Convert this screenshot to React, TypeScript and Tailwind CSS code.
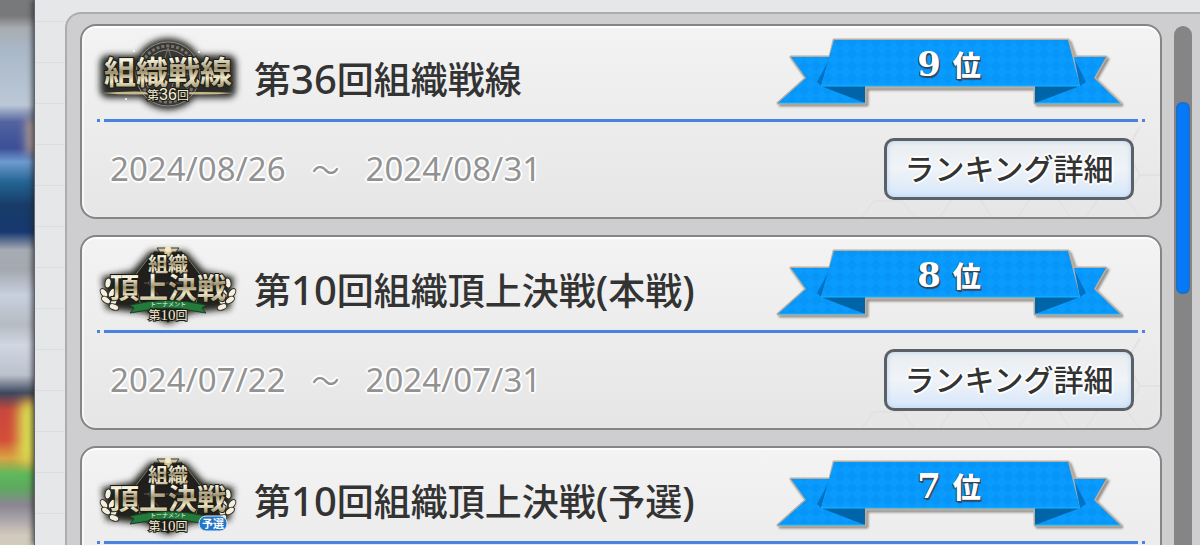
import type { ReactNode } from 'react'

interface RankingEntry {
  id: string
  title: string
  start: string
  end: string
  rank: number
  logo: 'front' | 'final' | 'qualifier'
}

const ENTRIES: RankingEntry[] = [
  { id: 'front-36', title: '第36回組織戦線', start: '2024/08/26', end: '2024/08/31', rank: 9, logo: 'front' },
  { id: 'final-10', title: '第10回組織頂上決戦(本戦)', start: '2024/07/22', end: '2024/07/31', rank: 8, logo: 'final' },
  { id: 'qualifier-10', title: '第10回組織頂上決戦(予選)', start: '', end: '', rank: 7, logo: 'qualifier' },
]

const LOGO_LABELS = { front: '組織戦線', final: '組織頂上決戦', qualifier: '組織頂上決戦 予選' }

// Leaves of the left laurel, mirrored for the right one
const LEAVES = [
  [18, 44, 10],
  [14, 54, -35],
  [22, 54, 30],
  [16, 61, -55],
  [24, 62, 20],
  [24, 68, -70],
]

function Defs({ id }: { id: string }) {
  return (
    <defs>
      <linearGradient id={`${id}-gold`} x1="0" y1="0" x2="0.1" y2="1">
        <stop offset="0" stopColor="#8d8060" />
        <stop offset="0.3" stopColor="#fbf7e2" />
        <stop offset="0.55" stopColor="#9c8f6c" />
        <stop offset="0.75" stopColor="#f1e9c8" />
        <stop offset="1" stopColor="#8b7d57" />
      </linearGradient>
      <filter id={`${id}-blur`} x="-20%" y="-30%" width="140%" height="160%">
        <feGaussianBlur stdDeviation="3" />
      </filter>
    </defs>
  )
}

function LogoText({ id, x, y, size, children }: { id: string; x: number; y: number; size: number; children: ReactNode }) {
  return (
    <text
      x={x}
      y={y}
      fontSize={size}
      fontWeight="700"
      textAnchor="middle"
      fill={`url(#${id}-gold)`}
      stroke="#1b1a15"
      strokeWidth="2"
      strokeLinejoin="round"
      paintOrder="stroke"
    >
      {children}
    </text>
  )
}

function FrontLogo({ id }: { id: string }) {
  return (
    <>
      <g filter={`url(#${id}-blur)`} fill="#2b2a28">
        <circle cx="78" cy="46" r="36" />
        <rect x="10" y="27" width="136" height="43" rx="8" />
      </g>
      <circle cx="78" cy="46" r="32" fill="#383734" stroke="#8f8d84" />
      <circle cx="78" cy="46" r="28" fill="none" stroke="#77756b" strokeWidth="3" strokeDasharray="3 2" />
      <circle cx="78" cy="46" r="24" fill="none" stroke="#8f8d84" />
      <path d="M78 20 L86 46 L78 72 L70 46 Z M53 46 H103" fill="none" stroke="#77756b" />
      <path d="M12 65 Q45 62 78 65 Q111 68 144 65 Q111 63 78 65 Q45 68 12 65" fill="#c7b98d" />
      <g fill="#fff">
        <circle cx="44" cy="23" r="1" />
        <circle cx="109" cy="24" r="1" />
        <circle cx="36" cy="71" r="1" />
      </g>
      <LogoText id={id} x={78} y={56} size={32}>組織戦線</LogoText>
      <text x="78" y="72" fontSize="12" textAnchor="middle" fill="#f4edd2" stroke="#1b1a15" strokeWidth="2" paintOrder="stroke">
        第<tspan fontSize="16" fontFamily="Liberation Sans">36</tspan>回
      </text>
    </>
  )
}

function FinalLogo({ id, qualifier }: { id: string; qualifier: boolean }) {
  const laurel = LEAVES.map(([x, y, angle]) => (
    <ellipse key={`${x}-${y}`} cx={x} cy={y} rx="3" ry="5" transform={`rotate(${angle} ${x} ${y})`} />
  ))
  return (
    <>
      <g filter={`url(#${id}-blur)`} fill="#23221f">
        <path d="M60 12 H96 L114 32 L144 38 L140 70 L102 74 L78 85 L54 74 L16 70 L12 38 L42 32 Z" />
      </g>
      <path d="M64 12 H92 L112 38 L106 64 L78 84 L50 64 L44 38 Z" fill="#201f1d" stroke="#77756b" />
      <path d="M78 22 L98 44 L78 68 L58 44 Z M54 44 H102" fill="none" stroke="#5c5a52" />
      <path d="M67 9 H89 L86 13 H82 V18 H74 V13 H70 Z" fill="#d5c89c" stroke="#3b382f" />
      <circle cx="78" cy="10" r="3" fill="#f1e9c8" />
      <g fill="#f4f0db" stroke="#2b2a26">
        {laurel}
        <g transform="translate(156 0) scale(-1 1)">{laurel}</g>
      </g>
      <LogoText id={id} x={78} y={33} size={20}>組織</LogoText>
      <LogoText id={id} x={78} y={60} size={29}>頂上決戦</LogoText>
      <path d="M40 66 Q78 57 116 66 L112 69 L116 74 L104 72 Q78 66 52 72 L40 74 L44 69 Z" fill="#237a3b" stroke="#153f22" />
      <text x="78" y="67" fontSize="6" textAnchor="middle" fill="#e9f3e5">トーナメント</text>
      <text x="78" y="81" fontSize="12" textAnchor="middle" fill="#f4edd2" stroke="#1b1a15" strokeWidth="2" paintOrder="stroke">
        第<tspan fontSize="15" fontFamily="Liberation Serif">10</tspan>回
      </text>
      {qualifier && (
        <>
          <rect x="109" y="66" width="28" height="15" rx="7" fill="#2474c9" stroke="#dcecfb" />
          <text x="123" y="78" fontSize="11" fontWeight="700" textAnchor="middle" fill="#fff">予選</text>
        </>
      )}
    </>
  )
}

function EventLogo({ id, kind }: { id: string; kind: RankingEntry['logo'] }) {
  return (
    <svg
      viewBox="0 0 156 90"
      className="w-[156px] h-[90px] shrink-0 font-['Noto_Sans_CJK_JP',sans-serif]"
      role="img"
      aria-label={LOGO_LABELS[kind]}
    >
      <Defs id={id} />
      {kind === 'front' ? <FrontLogo id={id} /> : <FinalLogo id={id} qualifier={kind === 'qualifier'} />}
    </svg>
  )
}

function RankRibbon({ id, rank }: { id: string; rank: number }) {
  return (
    <div className="grid shrink-0">
      <svg viewBox="0 0 350 74" className="col-start-1 row-start-1 w-[350px] h-[74px]" aria-hidden="true">
        <defs>
          <pattern id={`${id}-check`} width="12" height="12" patternUnits="userSpaceOnUse">
            <rect width="12" height="12" fill="#0a9bff" />
            <path d="M6 0 L12 6 L6 12 L0 6 Z" fill="#0795f8" />
          </pattern>
          <filter id={`${id}-shadow`} x="-5%" y="-10%" width="110%" height="130%">
            <feDropShadow dx="2" dy="2" stdDeviation="1" floodColor="#6f675c" floodOpacity="0.7" />
          </filter>
        </defs>
        <path
          filter={`url(#${id}-shadow)`}
          d="M60 4 H294 L300 21 H332 L320 42 L346 67 H261 V51 H91 V67 H4 L32 42 L17 21 H56 Z"
          fill="#b9aea2"
          stroke="#b9aea2"
          strokeWidth="3"
          strokeLinejoin="round"
        />
        <path d="M17 21 H56 L47 50 L91 50 V67 H4 L32 42 Z" fill={`url(#${id}-check)`} />
        <path d="M332 21 H300 L306 50 L261 50 V67 H346 L320 42 Z" fill={`url(#${id}-check)`} />
        <path d="M55 24 L47 50 L43 46 Z M301 24 L306 50 L312 46 Z" fill="#0072c4" />
        <path d="M47 50 H91 V67 Z M306 50 H261 V67 Z" fill="#0064a8" />
        <path d="M60 4 H294 L306 50 H47 Z" fill={`url(#${id}-check)`} />
        <path d="M47 50 H306 M4 67 H91 M261 67 H346" fill="none" stroke="#18b8ff" />
      </svg>
      <p className="col-start-1 row-start-1 flex h-14 items-center justify-center gap-3 leading-none font-bold text-white [text-shadow:1px_1px_0_#34465c,-1px_1px_0_#34465c,1px_2px_1px_#34465c]">
        <span className="font-['DejaVu_Serif',serif] text-[34px]">{rank}</span>
        <span className="font-['Noto_Sans_CJK_JP',sans-serif] text-[28px] font-black">位</span>
      </p>
    </div>
  )
}

function Title({ text }: { text: string }) {
  return (
    <h2 className="flex-1 pt-3 pl-2 text-[37px] leading-[48px] font-medium whitespace-nowrap text-[#333]">
      {text.split(/([\d()]+)/).map((part, i) =>
        i % 2 === 1 ? (
          <span key={i} className="font-['Noto_Sans',sans-serif] text-[40px]">{part}</span>
        ) : (
          part
        ),
      )}
    </h2>
  )
}

function Divider() {
  return (
    <div className="mx-[15px] flex h-[3px] gap-1">
      <span className="w-[3px] bg-[#4a82dc]" />
      <span className="flex-1 bg-[#4a82dc] shadow-[0_0_2px_#d5ecff]" />
      <span className="w-[3px] bg-[#4a82dc]" />
    </div>
  )
}

function RankingCard({ entry }: { entry: RankingEntry }) {
  return (
    <li className="relative shrink-0 rounded-2xl border-2 border-[#858585] bg-linear-to-b from-[#f3f3f4] to-[#e6e6e6] shadow-[inset_0_2px_1px_#fff,inset_2px_0_1px_#f8f8f8]">
      {/* Faint honeycomb in the lower corner */}
      <svg viewBox="0 0 370 90" className="pointer-events-none absolute right-0 bottom-0 h-[90px] w-[370px]" aria-hidden="true">
        <path
          d="M350 0 L336 24 L350 48 L370 48 M336 24 H308 M350 48 L336 72 L350 90 M336 72 H308 L296 90 M308 72 L296 50 M228 90 L240 72 H268 L280 90 M150 90 L162 72 H190 L202 90 M72 90 L84 74 H112 L124 90"
          fill="none"
          stroke="#e2e2e2"
          strokeWidth="2"
        />
      </svg>

      <div className="flex h-[93px] items-center pr-9 pl-2">
        <EventLogo id={entry.id} kind={entry.logo} />
        <Title text={entry.title} />
        <RankRibbon id={entry.id} rank={entry.rank} />
      </div>

      <Divider />

      <div className="relative flex h-[95px] items-center justify-between pr-[26px] pb-0.5 pl-7">
        {entry.start && (
          <p className="flex items-center gap-[26px] font-['Noto_Sans','Noto_Sans_CJK_JP',sans-serif] text-[33px] leading-none text-[#929292] [text-shadow:2px_0_1px_#fff,-2px_0_1px_#fff,0_2px_1px_#fff,0_-2px_1px_#fff,1px_1px_1px_#fff,-1px_-1px_1px_#fff]">
            <time>{entry.start}</time>
            <span className="font-['Noto_Sans_CJK_JP',sans-serif] text-[28px]">～</span>
            <time>{entry.end}</time>
          </p>
        )}
        <button
          type="button"
          className="ml-auto h-[62px] w-[250px] rounded-[10px] border-[3px] border-[#5b6066] bg-linear-to-b from-[#e9edf0] via-[#f0f3f7] to-[#d6e7fb] pb-1 text-[30px] leading-none font-medium text-[#333] shadow-[inset_0_0_5px_#b5d4f0] [text-shadow:2px_0_1px_#fff,-2px_0_1px_#fff,0_2px_1px_#fff,0_-2px_1px_#fff,1px_1px_1px_#fff,-1px_-1px_1px_#fff]"
        >
          ランキング詳細
        </button>
      </div>
    </li>
  )
}

export default function App() {
  return (
    <div className="flex h-screen overflow-hidden bg-[#d5d8dc] font-['Noto_Sans_CJK_JP',sans-serif]">
      {/* Blurred scene showing behind the panel */}
      <div className="relative w-[34px] shrink-0 overflow-hidden bg-[linear-gradient(#77797b_0px,#77797b_16px,#a8acb0_28px,#a9b8c8_50px,#bcc8d6_105px,#5263a0_122px,#3c4f97_148px,#6f9bd0_162px,#236493_182px,#183c69_205px,#16386f_232px,#a7acb4_250px,#a3a9b0_270px,#c8d0de_295px,#b5bcc3_325px,#d0d6e2_345px,#bcc2cc_375px,#3c475e_393px,#c9463c_410px,#d44e38_440px,#d9a343_458px,#5fb95b_474px,#5da960_488px,#8c8592_505px,#a7a1a8_518px,#d2cabd_535px)]">
        <div className="absolute top-[400px] -right-2 h-16 w-6 rounded-full bg-[#d9dc52] blur-[6px]" />
        <div className="absolute top-[118px] -right-2 h-9 w-4 bg-[#b59f97] blur-[5px]" />
      </div>

      <div className="relative flex min-w-0 flex-1 border-l border-[#606570] bg-[#e6e7e8] bg-[repeating-linear-gradient(transparent_0px,transparent_40px,#dcdddf_40px,#dcdddf_41px)] bg-[position:0_-19px] pt-3 pl-[30px] shadow-[-2px_0_5px_#222222aa]">
        <main className="flex min-w-0 flex-1 gap-3 overflow-hidden rounded-tl-2xl border-t-2 border-l-2 border-[#acacae] bg-[#cecdcf] pt-[10px] pr-2 pl-[13px]">
          <ul className="flex min-w-0 flex-1 flex-col gap-4">
            {ENTRIES.map((entry) => (
              <RankingCard key={entry.id} entry={entry} />
            ))}
          </ul>

          {/* Scroll track */}
          <div className="mt-0.5 w-[18px] shrink-0 rounded-t-full bg-[#858585] px-0.5 pt-[76px]">
            <div className="h-48 rounded-md border-2 border-[#1a6fd0] bg-[#0579f7]" />
          </div>
        </main>
      </div>
    </div>
  )
}
